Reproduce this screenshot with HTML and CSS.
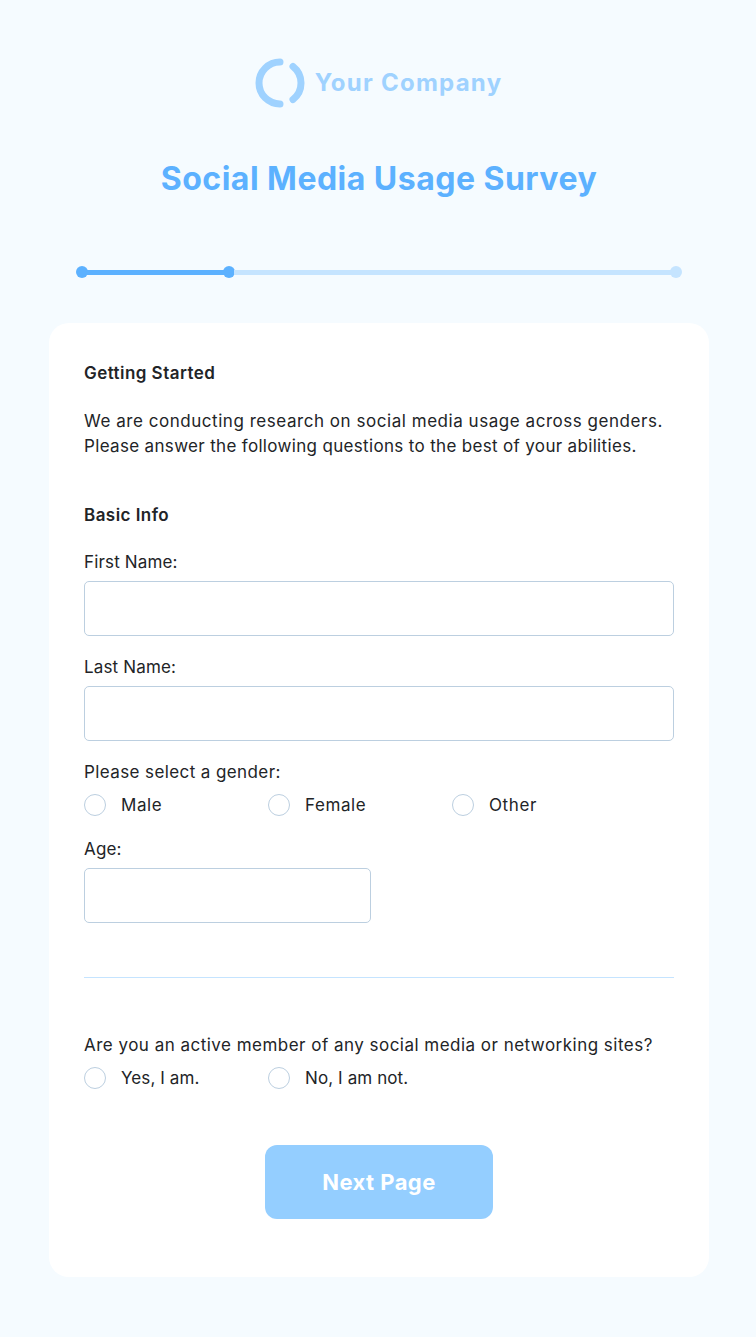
FILE: index.html
```html
<!DOCTYPE html>
<html lang="en">
<head>
<meta charset="utf-8">
<title>Social Media Usage Survey</title>
<link rel="stylesheet" href="styles.css">
</head>
<body>
<main class="page">
  <header class="brand">
    <svg class="brand-mark" viewBox="0 0 50 50" width="50" height="50" aria-hidden="true">
      <path d="M25 4A21 21 0 0 0 25 46M38 8.500A21 21 0 0 1 38 41.500" fill="none" stroke="#9fd2ff" stroke-width="7" stroke-linecap="round"/>
    </svg>
    <span class="brand-name">Your Company</span>
  </header>
  <h1 class="title">Social Media Usage Survey</h1>
  <div class="progress">
    <span class="dot"></span><span class="line line-done"></span><span class="dot"></span><span class="line line-todo"></span><span class="dot dot-todo"></span>
  </div>
  <form class="card">
    <h2 class="heading">Getting Started</h2>
    <p class="intro"><span class="intro-line">We are conducting research on social media usage across genders.</span> <span class="intro-line intro-line-second">Please answer the following questions to the best of your abilities.</span></p>
    <h2 class="heading heading-basic">Basic Info</h2>
    <label class="label label-first">First Name:</label>
    <div class="input"></div>
    <label class="label">Last Name:</label>
    <div class="input"></div>
    <div class="label label-gender">Please select a gender:</div>
    <div class="radios radios-gender">
      <div class="radio"><span class="circle"></span><span class="radio-text">Male</span></div>
      <div class="radio"><span class="circle"></span><span class="radio-text">Female</span></div>
      <div class="radio"><span class="circle"></span><span class="radio-text">Other</span></div>
    </div>
    <label class="label label-age">Age:</label>
    <div class="input input-short"></div>
    <hr class="divider">
    <div class="label label-question">Are you an active member of any social media or networking sites?</div>
    <div class="radios radios-question">
      <div class="radio"><span class="circle"></span><span class="radio-text">Yes, I am.</span></div>
      <div class="radio"><span class="circle"></span><span class="radio-text">No, I am not.</span></div>
    </div>
    <div class="actions"><button class="next" type="button">Next Page</button></div>
  </form>
</main>
</body>
</html>
```
FILE: styles.css
```css
* { box-sizing: border-box; }
html, body { margin: 0; padding: 0; }
body {
  background: #f5fbff;
  color: #222427;
  font-family: "Inter", "Liberation Sans", sans-serif;
  height: 1337px;
  overflow: hidden;
}
.page { padding: 58px 47px 0 49px; }
.brand {
  display: flex;
  align-items: center;
  justify-content: center;
  gap: 10px;
  height: 50px;
  padding-right: 1px;
}
.brand-mark { display: block; flex: none; }
.brand-name {
  color: #9fd2ff;
  font-size: 24px;
  font-weight: 700;
  letter-spacing: 1.25px;
  line-height: 50px;
}
.title {
  margin: 46px 0 0;
  color: #5cb1ff;
  font-size: 32px;
  font-weight: 700;
  letter-spacing: 0.48px;
  line-height: 50px;
  text-align: center;
}
.progress {
  display: flex;
  align-items: center;
  height: 12px;
  margin: 62px 27px 0 27px;
}
.dot {
  flex: none;
  width: 12px;
  height: 12px;
  border-radius: 50%;
  background: #5cb1ff;
}
.dot-todo { background: #c5e4ff; }
.line { height: 5px; }
.line-done { flex: none; width: 137px; margin: 0 -1px; background: #5cb1ff; }
.line-todo { flex: 1; margin: 0 -1px; background: #c5e4ff; }
.card {
  width: 660px;
  height: 954px;
  margin-top: 45px;
  padding: 38px 35px 0;
  background: #fff;
  border-radius: 20px;
}
.heading {
  margin: 0;
  font-size: 17px;
  font-weight: 600;
  letter-spacing: 0.45px;
  line-height: 25px;
}
.heading-basic { margin-top: 44px; }
.intro {
  margin: 23px 0 0;
  font-size: 17px;
  line-height: 25px;
}
.intro-line { display: block; letter-spacing: 0.54px; }
.intro-line-second { letter-spacing: 0.33px; }
.label {
  display: block;
  font-size: 17px;
  letter-spacing: 0.15px;
  line-height: 25px;
  margin-top: 19px;
}
.label-first { margin-top: 22px; }
.label-gender { letter-spacing: 0.4px; }
.label-age { margin-top: 20px; }
.label-question { letter-spacing: 0.48px; }
.input {
  width: 590px;
  height: 55px;
  margin-top: 6px;
  background: #fff;
  border: 1px solid #bccfe0;
  border-radius: 5px;
}
.input-short { width: 287px; }
.radios {
  display: flex;
  margin-top: 7px;
}
.radio {
  display: flex;
  align-items: center;
  gap: 15px;
  width: 184px;
  height: 25px;
  font-size: 17px;
  line-height: 25px;
}
.radios-gender .radio { letter-spacing: 0.6px; }
.radios-question .radio { letter-spacing: 0.1px; }
.radio-text { padding-top: 2px; }
.circle {
  flex: none;
  width: 22px;
  height: 22px;
  border: 1px solid #bccfe0;
  border-radius: 50%;
}
.divider {
  width: 590px;
  height: 1px;
  margin: 54px 0 55px;
  border: 0;
  background: #c5e4ff;
}
.actions {
  display: flex;
  justify-content: center;
  margin-top: 55px;
}
.next {
  width: 228px;
  height: 74px;
  padding: 0;
  border: 0;
  border-radius: 12px;
  background: #94ceff;
  color: #fff;
  font-family: inherit;
  font-size: 22px;
  font-weight: 700;
  letter-spacing: 0.45px;
}
```
